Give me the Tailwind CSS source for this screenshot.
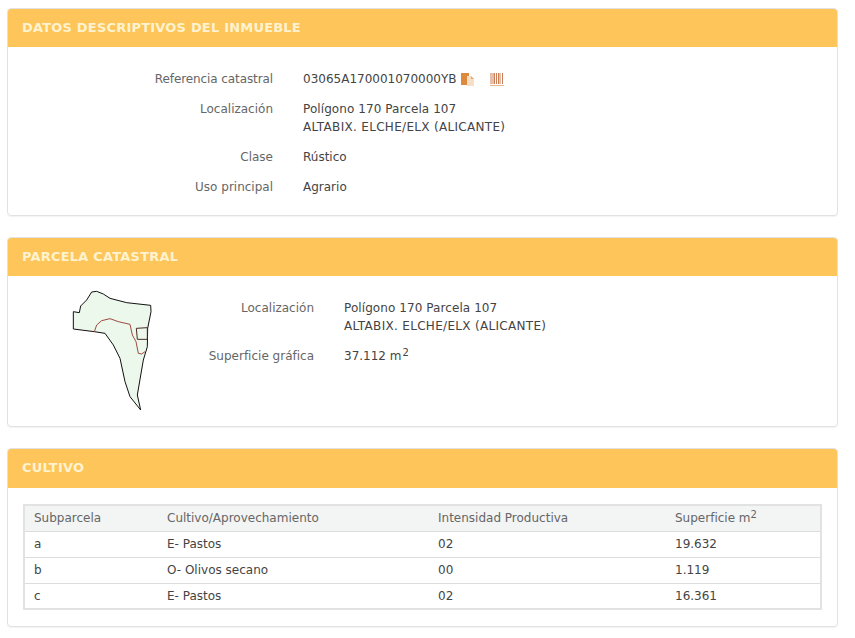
<!DOCTYPE html>
<html lang="es">
<head>
    <meta charset="UTF-8">
    <title>Datos descriptivos del inmueble</title>
    <script src="https://cdn.jsdelivr.net/npm/@tailwindcss/browser@4"></script>
</head>
<body class="bg-white font-['DejaVu_Sans',sans-serif] text-[12px] leading-[18px] text-[#444]">
    <div class="w-[855px] h-[638px] overflow-hidden pt-2 pl-[7px]">

        <!-- Datos descriptivos -->
        <section class="w-[831px] h-[208px] mb-[21px] rounded-[4px] border border-[#e2e2e2] shadow-[0_1px_1px_rgba(0,0,0,0.05)] overflow-hidden">
            <h2 class="h-[39px] -mx-px -mt-px pl-[15px] flex items-center bg-[#fdc55a] text-[#fff3cf] font-bold text-[13px] tracking-[0.2px]">DATOS DESCRIPTIVOS DEL INMUEBLE</h2>
            <div class="pt-[23px] flex flex-col gap-3">
                <div class="flex gap-[30px]">
                    <span class="w-[265px] text-right text-[#666] tracking-[-0.1px]">Referencia catastral</span>
                    <span class="flex items-center">03065A170001070000YB
                        <svg class="ml-1 w-[14px] h-[14px]" viewBox="0 0 14 14"><path d="M0 1h8v3H6v9H0z" fill="#dd8a3e"/><path d="M6 4h4l3 3v7H6z" fill="#f6dfc6"/><path d="M10 4v3h3z" fill="#e8a868"/></svg>
                        <svg class="ml-[15px] w-[14px] h-[13px]" viewBox="0 0 14 13"><path d="M1 0v11M3 0v11M4.500 0v11M6.500 0v11M8.500 0v11M10 0v11M12.500 0v11" stroke="#c98058" stroke-width="1"/><path d="M0 12.500h14" stroke="#e9b68c" stroke-width="1"/></svg>
                    </span>
                </div>
                <div class="flex gap-[30px]">
                    <span class="w-[265px] text-right text-[#666]">Localización</span>
                    <span class="tracking-[0.08px]">Polígono 170 Parcela 107<br><span class="tracking-[0.31px]">ALTABIX. ELCHE/ELX (ALICANTE)</span></span>
                </div>
                <div class="flex gap-[30px]">
                    <span class="w-[265px] text-right text-[#666]">Clase</span>
                    <span>Rústico</span>
                </div>
                <div class="flex gap-[30px]">
                    <span class="w-[265px] text-right text-[#666]">Uso principal</span>
                    <span>Agrario</span>
                </div>
            </div>
        </section>

        <!-- Parcela catastral -->
        <section class="w-[831px] h-[190px] mb-[21px] rounded-[4px] border border-[#e2e2e2] shadow-[0_1px_1px_rgba(0,0,0,0.05)] overflow-hidden">
            <h2 class="h-[39px] -mx-px -mt-px pl-[15px] flex items-center bg-[#fdc55a] text-[#fff3cf] font-bold text-[13px] tracking-[0.2px]">PARCELA CATASTRAL</h2>
            <div class="flex">
                <svg class="ml-[42px] mt-1 w-[120px] h-[140px] shrink-0" viewBox="0 0 360 420">
                    <path d="M70 95 88 98 92 78 110 60 125 36 140 34 160 42 180 55 230 68 302 76 303 95 293 145 292 200 280 240 262 345 272 390 240 350 225 305 210 235 190 195 165 160 133 155 70 147Z" fill="#ebf8eb" stroke="#111" stroke-width="3"/>
                    <path d="M133 155 140 135 155 122 180 116 205 125 240 133 247 165 258 185 265 220 275 222 285 215" fill="none" stroke="#a04a40" stroke-width="3"/>
                    <path d="M259 145 292 143 292 178 262 178Z" fill="none" stroke="#4a2a22" stroke-width="3"/>
                </svg>
                <div class="pt-[23px] flex flex-col gap-3">
                    <div class="flex gap-[30px]">
                        <span class="w-[144px] text-right text-[#666]">Localización</span>
                        <span class="tracking-[0.08px]">Polígono 170 Parcela 107<br><span class="tracking-[0.31px]">ALTABIX. ELCHE/ELX (ALICANTE)</span></span>
                    </div>
                    <div class="flex gap-[30px]">
                        <span class="w-[144px] text-right text-[#666]">Superficie gráfica</span>
                        <span>37.112 m<sup class="ml-px text-[10px] align-baseline top-[-4px] leading-none">2</sup></span>
                    </div>
                </div>
            </div>
        </section>

        <!-- Cultivo -->
        <section class="w-[831px] h-[179px] rounded-[4px] border border-[#e2e2e2] shadow-[0_1px_1px_rgba(0,0,0,0.05)] overflow-hidden">
            <h2 class="h-[40px] -mx-px -mt-px pl-[15px] flex items-center bg-[#fdc55a] text-[#fff3cf] font-bold text-[13px] tracking-[0.2px]">CULTIVO</h2>
            <div class="pt-4 pl-[15px]">
                <table class="w-[799px] table-fixed border-2 border-[#e2e2e2] border-collapse">
                    <thead>
                        <tr class="h-[26px] bg-[#f3f4f4] text-[#666] text-left">
                            <th class="w-[133px] pl-[9px] font-normal">Subparcela</th>
                            <th class="w-[271px] pl-[10px] font-normal">Cultivo/Aprovechamiento</th>
                            <th class="w-[237px] pl-[10px] font-normal">Intensidad Productiva</th>
                            <th class="pl-[10px] font-normal">Superficie m<sup class="text-[10px] align-baseline top-[-4px] leading-none">2</sup></th>
                        </tr>
                    </thead>
                    <tbody>
                        <tr class="h-[26px] border-t border-[#ddd]"><td class="pl-[9px]">a</td><td class="pl-[10px]">E- Pastos</td><td class="pl-[10px]">02</td><td class="pl-[10px]">19.632</td></tr>
                        <tr class="h-[26px] border-t border-[#ddd]"><td class="pl-[9px]">b</td><td class="pl-[10px]">O- Olivos secano</td><td class="pl-[10px]">00</td><td class="pl-[10px]">1.119</td></tr>
                        <tr class="h-[26px] border-t border-[#ddd]"><td class="pl-[9px]">c</td><td class="pl-[10px]">E- Pastos</td><td class="pl-[10px]">02</td><td class="pl-[10px]">16.361</td></tr>
                    </tbody>
                </table>
            </div>
        </section>
    </div>
</body>
</html>
